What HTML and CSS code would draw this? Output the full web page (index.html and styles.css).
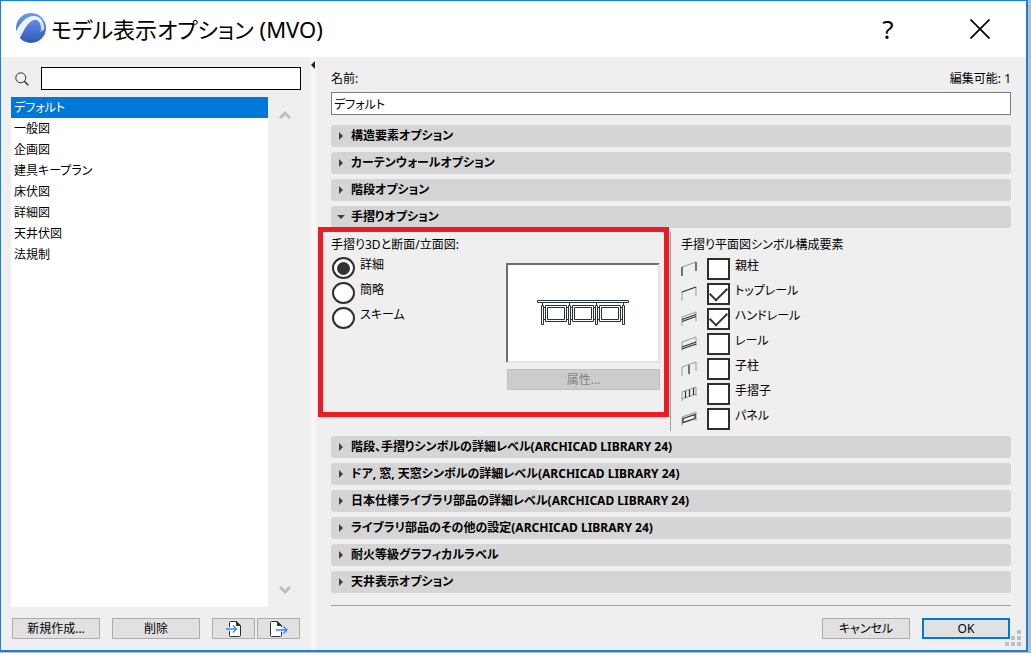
FILE: index.html
```
<!DOCTYPE html>
<html lang="ja">
<head>
    <meta charset="UTF-8">
    <meta name="viewport" content="width=device-width, initial-scale=1.0">
    <title>モデル表示オプション (MVO)</title>
    <link rel="stylesheet" href="styles.css">
</head>
<body>
    <div class="desktop">
    <div class="dialog">
        <header class="titlebar">
            <svg class="logo" width="32" height="32" viewBox="0 0 32 32">
                <defs>
                    <linearGradient id="ball" x1="0" y1="0" x2="0" y2="1">
                        <stop offset="0" stop-color="#6c9cf4"/>
                        <stop offset="1" stop-color="#3157b4"/>
                    </linearGradient>
                </defs>
                <circle cx="16" cy="15" r="15" fill="url(#ball)"/>
                <path d="M0 16L4 27C9 16 14 8 19 7c4-1 7 3 7 9 0 3 3 2 3-1C29 8 25 3 19 3 11 3 5 10 0 20z" fill="#fff" opacity="0.9"/>
                <path d="M26 10c2 4 1 8-1 9" fill="none" stroke="#a9c0ee" stroke-width="1"/>
            </svg>
            <h1>モデル表示オプション (MVO)</h1>
            <button class="title-button help" type="button">?</button>
            <button class="title-button" type="button" aria-label="閉じる">
                <svg width="20" height="20" viewBox="0 0 20 20"><path d="M0.5 0.5l19 19M19.5 0.5l-19 19" stroke="#000" stroke-width="1.7"/></svg>
            </button>
        </header>

        <div class="content">
            <aside class="sidebar">
                <div class="search">
                    <svg width="14" height="14" viewBox="0 0 14 14" fill="none" stroke="#333"><circle cx="5.8" cy="5.8" r="5"/><path d="M9.3 9.3l4 4" stroke-width="1.4"/></svg>
                    <input type="text" aria-label="検索">
                </div>
                <div class="list-area">
                    <ul class="list">
                        <li class="selected">デフォルト</li>
                        <li>一般図</li>
                        <li>企画図</li>
                        <li>建具キープラン</li>
                        <li>床伏図</li>
                        <li>詳細図</li>
                        <li>天井伏図</li>
                        <li>法規制</li>
                    </ul>
                    <div class="scroll">
                        <svg width="12" height="10" viewBox="0 0 12 10"><path d="M1 8l5-5 5 5" fill="none" stroke="#bfbfbf" stroke-width="3"/></svg>
                        <svg width="12" height="10" viewBox="0 0 12 10"><path d="M1 2l5 5 5-5" fill="none" stroke="#bfbfbf" stroke-width="3"/></svg>
                    </div>
                </div>
                <div class="sidebar-buttons">
                    <button class="button" type="button">新規作成...</button>
                    <button class="button" type="button">削除</button>
                    <div class="icon-buttons">
                        <button class="button icon" type="button" aria-label="読み込み">
                            <svg width="16" height="16" viewBox="0 0 16 16" fill="none"><path d="M3.5 6V1.5q0-1 1-1h6l4 4v10q0 1-1 1h-9q-1 0-1-1V10" fill="#fff" stroke="#263238"/><path d="M10.5 0.5v4h4z" fill="#263238" stroke="#263238"/><path d="M0 8h10M7 4.5l3.500 3.500-3.500 3.500" stroke="#2f86ff" stroke-width="1.3"/></svg>
                        </button>
                        <button class="button icon" type="button" aria-label="書き出し">
                            <svg width="18" height="16" viewBox="0 0 18 16" fill="none"><path d="M11.500 11v3.500q0 1-1 1h-9q-1 0-1-1v-13q0-1 1-1h6l4 4V6" fill="#fff" stroke="#263238"/><path d="M7.500 0.500v4h4z" fill="#263238" stroke="#263238"/><path d="M6 9h11M13.500 5.500L17 9l-3.500 3.500" stroke="#2f86ff" stroke-width="1.3"/></svg>
                        </button>
                    </div>
                </div>
            </aside>

            <div class="splitter">
                <svg width="4" height="8" viewBox="0 0 4 8"><path d="M4 0v8L0 4z" fill="#222"/></svg>
            </div>

            <main class="main">
                <div class="name-row">
                    <label for="name">名前:</label>
                    <span>編集可能: 1</span>
                </div>
                <input class="name-input" id="name" type="text" value="デフォルト">

                <div class="panels">
                    <button class="panel" type="button">構造要素オプション</button>
                    <button class="panel" type="button">カーテンウォールオプション</button>
                    <button class="panel" type="button">階段オプション</button>
                    <button class="panel open" type="button">手摺りオプション</button>
                    <div class="railing">
                        <section class="view3d">
                            <h2>手摺り3Dと断面/立面図:</h2>
                            <div class="view3d-body">
                                <div class="options">
                                    <label><input type="radio" name="detail" checked><span>詳細</span></label>
                                    <label><input type="radio" name="detail"><span>簡略</span></label>
                                    <label><input type="radio" name="detail"><span>スキーム</span></label>
                                </div>
                                <div class="preview-box">
                                    <div class="preview">
                                        <svg width="92" height="26" viewBox="0 0 92 26" fill="none" stroke="#263238">
                                            <path d="M0.500 0.500h91v2h-91zM5.500 3v2M32.500 3v2M59.500 3v2M86.500 3v2M4.500 5.500h2v19h-2zM31.500 5.500h2v19h-2zM58.500 5.500h2v19h-2zM85.500 5.500h2v19h-2z"/>
                                            <path d="M8.500 5.500h21v16h-21zM10.500 7.500h17v12h-17zM35.500 5.500h21v16h-21zM37.500 7.500h17v12h-17zM62.500 5.500h21v16h-21zM64.500 7.500h17v12h-17z"/>
                                            <path d="M7 7.500h1M7 19.500h1M30 7.500h1M30 19.500h1M34 7.500h1M34 19.500h1M57 7.500h1M57 19.500h1M61 7.500h1M61 19.500h1M84 7.500h1M84 19.500h1"/>
                                        </svg>
                                    </div>
                                    <button class="button" type="button" disabled>属性...</button>
                                </div>
                            </div>
                        </section>
                        <section class="symbols">
                            <h2>手摺り平面図シンボル構成要素</h2>
                            <div class="options">
                                <label>
                                    <svg width="16" height="16" viewBox="0 0 16 16" fill="none"><path d="M1 6l14-5" stroke="#999"/><path d="M1 6v9M15 1v9" stroke="#263238" stroke-width="1.3"/></svg>
                                    <input type="checkbox"><span>親柱</span>
                                </label>
                                <label>
                                    <svg width="16" height="16" viewBox="0 0 16 16" fill="none"><path d="M1 6v9M15 1v9" stroke="#999"/><path d="M1 6l14-5" stroke="#263238" stroke-width="1.3"/></svg>
                                    <input type="checkbox" checked><span>トップレール</span>
                                </label>
                                <label>
                                    <svg width="16" height="16" viewBox="0 0 16 16" fill="none"><path d="M1 15V6l14-5v9" stroke="#999"/><path d="M1 8.500l14-5M1 10.500l14-5" stroke="#263238" stroke-width="1.3"/></svg>
                                    <input type="checkbox" checked><span>ハンドレール</span>
                                </label>
                                <label>
                                    <svg width="16" height="16" viewBox="0 0 16 16" fill="none"><path d="M1 15V6l14-5v9" stroke="#999"/><path d="M1 11l14-5M1 13l14-5" stroke="#263238" stroke-width="1.3"/></svg>
                                    <input type="checkbox"><span>レール</span>
                                </label>
                                <label>
                                    <svg width="16" height="16" viewBox="0 0 16 16" fill="none"><path d="M1 15V6l14-5v9" stroke="#999"/><path d="M8 4v9" stroke="#263238" stroke-width="1.3"/></svg>
                                    <input type="checkbox"><span>子柱</span>
                                </label>
                                <label>
                                    <svg width="16" height="16" viewBox="0 0 16 16" fill="none"><path d="M1 15V6l14-5v9M1 13l14-5" stroke="#999"/><path d="M4.500 5v7M8.500 3.500v7M12.500 2v7" stroke="#263238" stroke-width="1.2"/></svg>
                                    <input type="checkbox"><span>手摺子</span>
                                </label>
                                <label>
                                    <svg width="16" height="16" viewBox="0 0 16 16" fill="none"><path d="M1 15V6l14-5v9" stroke="#999"/><path d="M2 7.500l12-4v4l-12 4z" stroke="#263238" stroke-width="1.3"/></svg>
                                    <input type="checkbox"><span>パネル</span>
                                </label>
                            </div>
                        </section>
                    </div>
                    <button class="panel" type="button">階段、手摺りシンボルの詳細レベル(ARCHICAD LIBRARY 24)</button>
                    <button class="panel" type="button">ドア, 窓, 天窓シンボルの詳細レベル(ARCHICAD LIBRARY 24)</button>
                    <button class="panel" type="button">日本仕様ライブラリ部品の詳細レベル(ARCHICAD LIBRARY 24)</button>
                    <button class="panel" type="button">ライブラリ部品のその他の設定(ARCHICAD LIBRARY 24)</button>
                    <button class="panel" type="button">耐火等級グラフィカルラベル</button>
                    <button class="panel" type="button">天井表示オプション</button>
                </div>

                <footer class="footer">
                    <button class="button" type="button">キャンセル</button>
                    <button class="button primary" type="button">OK</button>
                </footer>
            </main>
        </div>
        <svg class="grip" width="16" height="16" viewBox="0 0 16 16" fill="#bfbfbf"><path d="M12 0h4v4h-4zM6 6h4v4H6zM12 6h4v4h-4zM0 12h4v4H0zM6 12h4v4H6zM12 12h4v4h-4z"/></svg>
    </div>
    </div>
</body>
</html>
```
FILE: styles.css
```
* {
    box-sizing: border-box;
}
body {
    margin: 0;
    padding-bottom: 4px;
    min-height: 100vh;
    display: flex;
    background-color: #fff;
    color: #000;
    font-family: "Noto Sans", "Noto Sans CJK JP", sans-serif;
    font-size: 12px;
    line-height: 16px;
    font-feature-settings: "palt";
}
button, input {
    font: inherit;
    font-feature-settings: inherit;
    color: inherit;
}
svg {
    display: block;
    flex: none;
}
h1, h2 {
    margin: 0;
    font-weight: normal;
}
.desktop {
    flex: 1;
    display: flex;
    padding: 0 3px 1px 0;
    background-color: #b9bdc8;
}
.dialog {
    position: relative;
    flex: 1;
    display: flex;
    flex-direction: column;
    border: 1px solid #1a80d9;
    border-right-width: 2px;
    border-bottom-width: 2px;
    background-color: #efefef;
}

/* title bar */
.titlebar {
    display: flex;
    align-items: center;
    height: 56px;
    padding-left: 14px;
    background-color: #fff;
}
.titlebar h1 {
    flex: 1;
    margin-left: 4px;
    font-size: 22px;
    line-height: 32px;
}
.title-button {
    display: flex;
    align-items: center;
    justify-content: center;
    width: 92px;
    height: 54px;
    padding: 0;
    border: none;
    background: none;
}
.help {
    font-size: 26px;
}

.content {
    flex: 1;
    display: flex;
}

/* left side */
.sidebar {
    display: flex;
    flex-direction: column;
    width: 310px;
    padding: 10px 10px 11px 10px;
}
.search {
    display: flex;
    align-items: center;
    gap: 12px;
    padding-left: 4px;
}
.search input {
    flex: 1;
    min-width: 0;
    height: 23px;
    border: 1px solid #000;
    background-color: #fff;
}
.list-area {
    flex: 1;
    display: flex;
    margin-top: 7px;
}
.list {
    width: 257px;
    margin: 0;
    padding: 0;
    list-style: none;
    background-color: #fff;
}
.list li {
    padding: 3px 3px 2px;
}
.list .selected {
    background-color: #0078d7;
    color: #fff;
}
.scroll {
    flex: 1;
    display: flex;
    flex-direction: column;
    align-items: center;
    justify-content: space-between;
    padding: 13px 0 12px;
}
.sidebar-buttons {
    display: flex;
    gap: 12px;
    margin: 11px 0 0 1px;
}
.icon-buttons {
    display: flex;
    gap: 2px;
}
.button {
    width: 88px;
    height: 21px;
    padding: 0;
    border: 1px solid #adadad;
    background-color: #e1e1e1;
    line-height: 16px;
}
.icon {
    display: flex;
    align-items: center;
    justify-content: center;
    width: 43px;
}
.splitter {
    width: 5px;
    padding-top: 4px;
    border-right: 4px solid #f7f7f7;
    border-left: 1px solid #f7f7f7;
}
.splitter svg {
    margin-left: -1px;
}

/* right side */
.main {
    flex: 1;
    display: flex;
    flex-direction: column;
    padding: 14px 15px 11px;
}
.name-row {
    display: flex;
    justify-content: space-between;
}
.name-input {
    width: 100%;
    height: 23px;
    margin: 5px 0 10px;
    padding: 0 2px;
    border: 1px solid #7a7a7a;
    background-color: #fff;
}
.panels {
    display: flex;
    flex-direction: column;
    gap: 5px;
}
.panel {
    display: flex;
    align-items: center;
    gap: 6px;
    height: 22px;
    padding: 0 6px;
    border: none;
    border-radius: 3px;
    background-color: #d5d5d5;
    font-weight: bold;
    text-align: left;
}
.panel::before {
    content: "";
    border: 4px solid transparent;
    border-right-width: 0;
    border-left-color: #404040;
    margin: 0 2px;
}
.panel.open::before {
    border: 4px solid transparent;
    border-bottom-width: 0;
    border-top-color: #404040;
    margin: 0;
}

.railing {
    display: flex;
    gap: 1px;
    height: 204px;
    margin: -6px 0 0 -13px;
}
.railing h2 {
    font-size: 12px;
    line-height: 16px;
}
.view3d {
    width: 351px;
    height: 190px;
    padding: 5px 4px 0 8px;
    border: 5px solid #ed1c24;
}
.view3d-body {
    display: flex;
    justify-content: space-between;
}
.symbols {
    flex: 1;
    margin-top: 5px;
    padding: 5px 0 0 10px;
    border-left: 1px solid #a0a0a0;
}
.options {
    display: flex;
    flex-direction: column;
    gap: 2px;
    padding-top: 4px;
}
.view3d .options {
    padding-left: 1px;
}
.symbols .options {
    padding-top: 5px;
}
.options label {
    display: flex;
    align-items: flex-start;
    height: 23px;
}
.options span {
    margin-left: 5px;
}
.options svg {
    margin: 3px 10px 0 0;
}
.options input {
    appearance: none;
    display: grid;
    place-items: center;
    width: 23px;
    height: 22px;
    margin: 0;
    border: 2px solid #2e2e2e;
    background-color: #fff;
}
.options input[type="radio"] {
    border-radius: 50%;
}
.options input[type="radio"]:checked::before {
    content: "";
    width: 13px;
    height: 13px;
    border-radius: 50%;
    background-color: #333;
}
.options input[type="checkbox"]:checked::before {
    content: "";
    width: 15px;
    height: 8px;
    margin-bottom: 4px;
    border: solid #333;
    border-width: 0 0 2px 2px;
    rotate: -45deg;
}
.preview-box {
    margin-top: 10px;
}
.preview {
    display: flex;
    align-items: center;
    justify-content: center;
    width: 154px;
    height: 100px;
    border: 2px solid;
    border-color: #6d6d6d #e3e3e3 #e3e3e3 #6d6d6d;
    background-color: #fff;
}
.preview-box .button {
    display: block;
    width: 153px;
    margin: 6px 0 0 1px;
    border-color: #bfbfbf;
    background-color: #ccc;
    color: #838383;
}

.footer {
    display: flex;
    justify-content: flex-end;
    gap: 12px;
    margin-top: auto;
    padding: 12px 1px 0 0;
    border-top: 1px solid #a0a0a0;
}
.primary {
    border: 2px solid #0078d7;
}
.grip {
    position: absolute;
    right: 5px;
    bottom: 4px;
}
```
